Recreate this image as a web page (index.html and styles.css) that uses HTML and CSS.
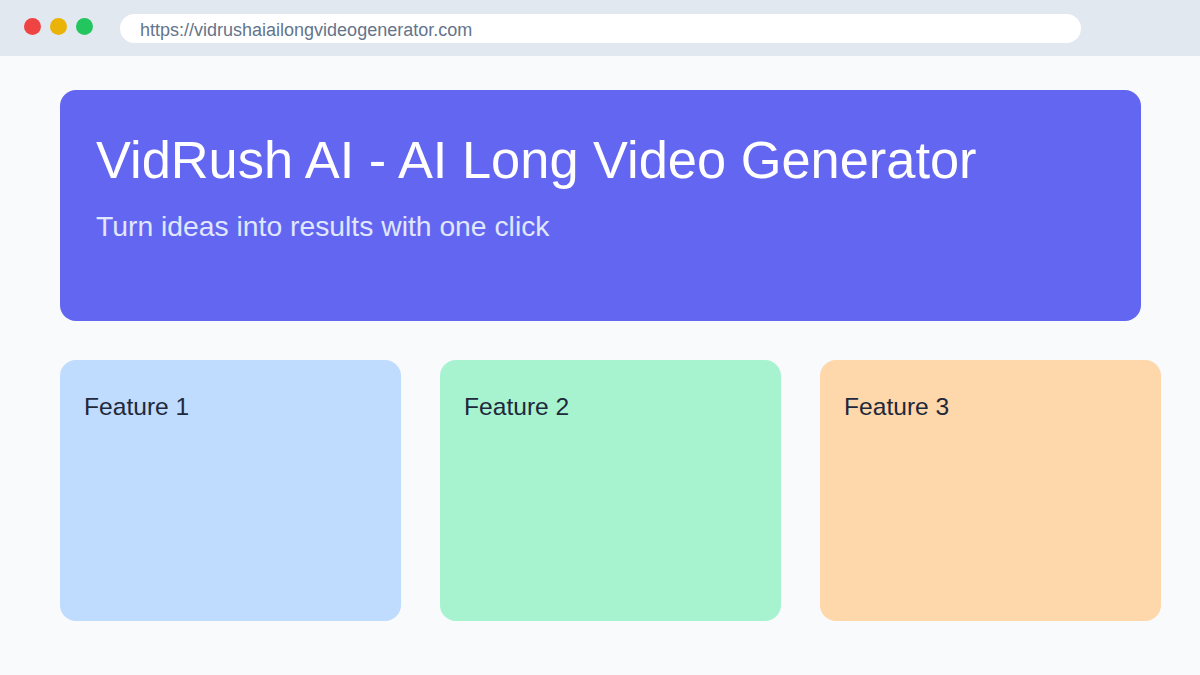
FILE: index.html
```html
<!DOCTYPE html>
<html lang="en">
<head>
    <meta charset="UTF-8">
    <meta name="viewport" content="width=device-width, initial-scale=1.0">
    <title>VidRush AI - AI Long Video Generator</title>
    <link rel="stylesheet" href="styles.css">
</head>
<body>
    <div class="browser-bar">
        <div class="dots">
            <span class="dot red"></span>
            <span class="dot yellow"></span>
            <span class="dot green"></span>
        </div>
        <div class="url-bar">https://vidrushaiailongvideogenerator.com</div>
    </div>

    <div class="page">
        <div class="hero">
            <h1>VidRush AI - AI Long Video Generator</h1>
            <p>Turn ideas into results with one click</p>
        </div>

        <div class="features">
            <div class="feature blue">Feature 1</div>
            <div class="feature green">Feature 2</div>
            <div class="feature orange">Feature 3</div>
        </div>
    </div>
</body>
</html>
```

FILE: styles.css
```css
body {
    font-family: "Liberation Sans", Arial, sans-serif;
    margin: 0;
    padding: 0;
    width: 1200px;
    height: 675px;
    overflow: hidden;
    background-color: #f8fafc;
}

.browser-bar {
    height: 56px;
    background-color: #e2e8f0;
    display: flex;
    align-items: flex-start;
    padding-left: 24px;
}

.dots {
    display: flex;
    gap: 9px;
    margin-top: 18px;
}

.dot {
    width: 17px;
    height: 17px;
    border-radius: 50%;
}

.dot.red {
    background-color: #ef4444;
}

.dot.yellow {
    background-color: #eab308;
}

.dot.green {
    background-color: #22c55e;
}

.url-bar {
    box-sizing: border-box;
    width: 961px;
    height: 29px;
    margin-top: 14px;
    margin-left: 27px;
    padding: 4px 20px 0;
    background-color: #fff;
    border-radius: 15px;
    color: #64748b;
    font-size: 18px;
    line-height: 25px;
}

.page {
    padding: 34px 0 0 60px;
}

.hero {
    box-sizing: border-box;
    width: 1081px;
    height: 231px;
    padding: 44px 36px 0;
    background-color: #6366f1;
    border-radius: 16px;
}

.hero h1 {
    margin: 0;
    color: #fff;
    font-size: 52.4px;
    font-weight: normal;
    line-height: 52px;
}

.hero p {
    margin: 26px 0 0;
    color: #e0e7ff;
    font-size: 28.3px;
    line-height: 28px;
}

.features {
    display: grid;
    grid-template-columns: repeat(3, 341px);
    gap: 39px;
    margin-top: 39px;
}

.feature {
    box-sizing: border-box;
    height: 261px;
    padding: 34px 24px 0;
    border-radius: 16px;
    color: #1e293b;
    font-size: 24.6px;
    line-height: 26px;
}

.feature.blue {
    background-color: #bfdbfe;
}

.feature.green {
    background-color: #a7f3d0;
}

.feature.orange {
    background-color: #fed7aa;
}
```
